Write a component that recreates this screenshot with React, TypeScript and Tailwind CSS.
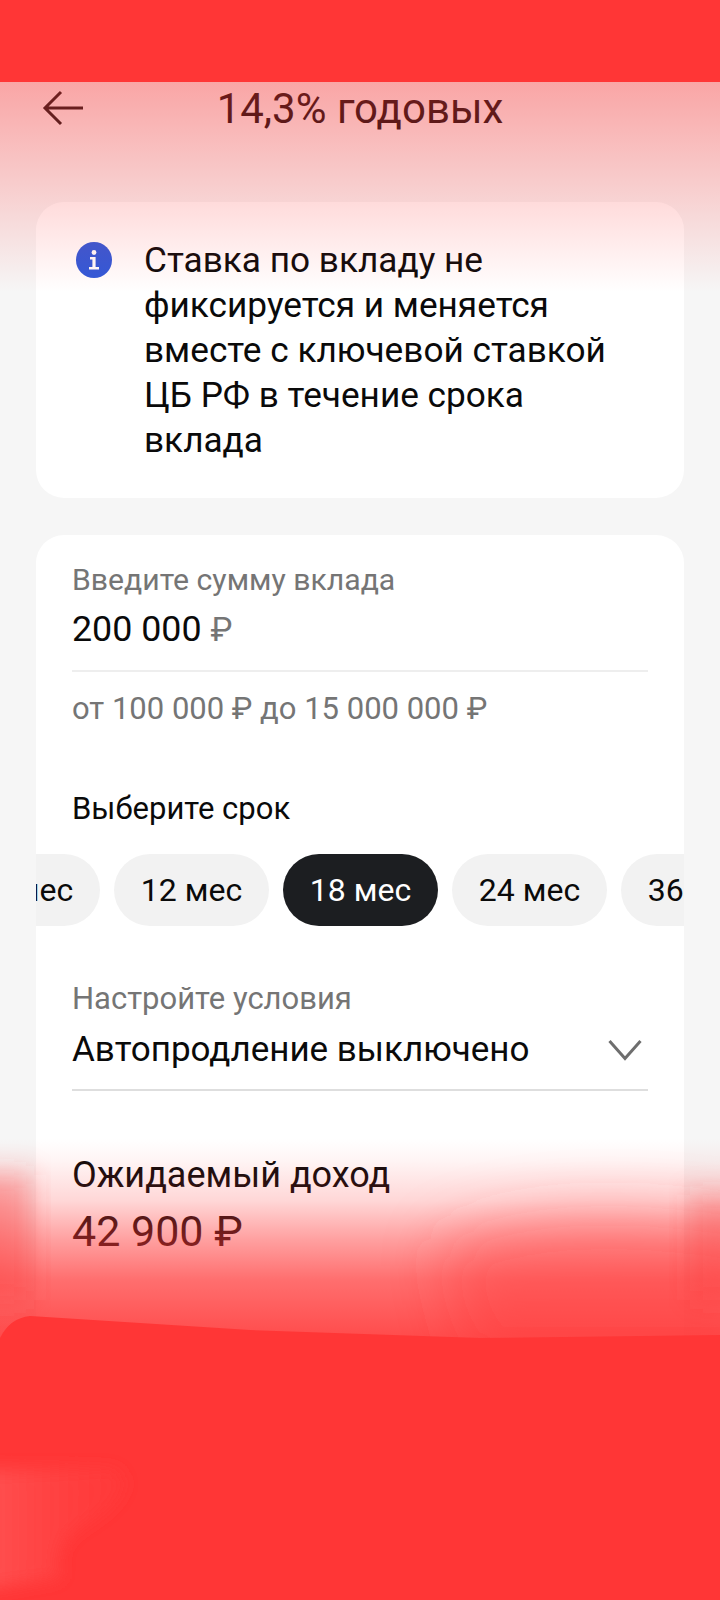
const terms = ["10 мес", "12 мес", "18 мес", "24 мес", "36 мес"];

const BottomFade = () => (
    <svg className="absolute left-0 top-[1100px]" width="720" height="500" viewBox="0 0 720 500">
        <defs>
            <linearGradient id="fade" x1="0" y1="0" x2="0" y2="1">
                <stop offset="0.16" stopColor="#ff3636" stopOpacity="0" />
                <stop offset="0.25" stopColor="#ff3636" stopOpacity="0.05" />
                <stop offset="0.42" stopColor="#ff3636" stopOpacity="0.2" />
                <stop offset="0.58" stopColor="#ff3636" stopOpacity="0.47" />
                <stop offset="0.75" stopColor="#ff3636" stopOpacity="0.72" />
                <stop offset="1" stopColor="#ff3636" stopOpacity="0.9" />
            </linearGradient>
            <linearGradient id="patch" x1="0" y1="0" x2="1" y2="0">
                <stop offset="0" stopColor="#ff5252" stopOpacity="1" />
                <stop offset="1" stopColor="#ff3c3c" stopOpacity="0.4" />
            </linearGradient>
            <filter id="soft" x="-30%" y="-60%" width="160%" height="220%">
                <feGaussianBlur stdDeviation="30" />
            </filter>
            <filter id="softer" x="-30%" y="-60%" width="160%" height="220%">
                <feGaussianBlur stdDeviation="14" />
            </filter>
            <filter id="edge" x="-30%" y="-30%" width="160%" height="160%">
                <feGaussianBlur stdDeviation="8" />
            </filter>
        </defs>
        <rect x="0" y="0" width="720" height="240" fill="url(#fade)" />
        <path d="M440 150 C520 105 640 110 760 130 V260 H470 Z" fill="#ff3636" fillOpacity="0.4" filter="url(#soft)" />
        <path d="M-40 75 H30 V200 H-40 Z" fill="#ff3636" fillOpacity="0.4" filter="url(#softer)" />
        <path d="M690 95 H760 V200 H690 Z" fill="#ff3636" fillOpacity="0.3" filter="url(#softer)" />
        <path d="M0 238 Q10 218 30 216 L250 230 L480 238 L720 235 V500 H0 Z" fill="#ff3636" />
        <path d="M-20 370 L115 368 Q145 390 85 425 Q50 445 62 478 L-20 490 Z" fill="url(#patch)" filter="url(#edge)" />
    </svg>
);

export default function App() {
    return (
        <div className="relative h-[1600px] w-[720px] overflow-hidden bg-[#f6f6f6] font-['Roboto',sans-serif] text-[#0a0a0a]">
            <div className="h-[82px] bg-[#ff3636]" />

            <header className="relative flex h-[52px] items-center justify-center">
                <svg className="absolute left-[42px] top-[8px]" width="44" height="36" viewBox="0 0 44 36" fill="none" stroke="#111" strokeWidth="3">
                    <path d="M41 18H3M19 2L3 18l16 16" />
                </svg>
                <h1 className="pt-[1px] text-[42px] leading-[52px]">14,3% годовых</h1>
            </header>

            <section className="mx-[36px] mt-[68px] flex h-[296px] gap-[32px] rounded-[28px] bg-white pl-[40px] pt-[36px]">
                <svg className="mt-[4px] shrink-0" width="36" height="36" viewBox="0 0 36 36">
                    <circle cx="18" cy="18" r="18" fill="#2f59da" />
                    <circle cx="18" cy="10.5" r="2.4" fill="#fff" />
                    <path d="M14 15h5.6v10H23v2.6H13V25h3.4v-7.4H14z" fill="#fff" />
                </svg>
                <p className="w-[490px] text-[35.2px] leading-[45px]">
                    Ставка по вкладу не фиксируется и меняется вместе с ключевой ставкой ЦБ РФ в течение срока вклада
                </p>
            </section>

            <section className="mx-[36px] mt-[37px] h-[900px] rounded-[28px] bg-white pt-[26px]">
                <div className="px-[36px]">
                    <div className="text-[30.2px] leading-[38px] text-[#757575]">Введите сумму вклада</div>
                    <div className="mt-[10px] text-[35.8px] leading-[40px]">
                        200 000 <span className="text-[33px] text-[#757575]">₽</span>
                    </div>
                    <div className="mt-[20px] h-[2px] bg-[#eeeeee]" />
                    <div className="mt-[18px] text-[31px] leading-[38px] text-[#757575]">от 100 000 ₽ до 15 000 000 ₽</div>
                    <div className="mt-[62px] text-[31px] leading-[38px]">Выберите срок</div>
                </div>

                <div className="mt-[26px] flex gap-[14px] overflow-hidden">
                    {terms.map((term, i) => (
                        <div
                            key={term}
                            className={
                                i === 2
                                    ? "flex h-[72px] w-[155px] shrink-0 items-center justify-center rounded-full bg-[#1c1e21] text-[32px] text-white"
                                    : i === 0
                                      ? "-ml-[91px] flex h-[72px] w-[155px] shrink-0 items-center justify-center rounded-full bg-[#f2f2f2] text-[32px]"
                                      : "flex h-[72px] w-[155px] shrink-0 items-center justify-center rounded-full bg-[#f2f2f2] text-[32px]"
                            }
                        >
                            {term}
                        </div>
                    ))}
                </div>

                <div className="px-[36px]">
                    <div className="mt-[54px] text-[31px] leading-[38px] text-[#757575]">Настройте условия</div>
                    <div className="mt-[11px] flex items-center justify-between border-b-2 border-[#dedede] pb-[19px]">
                        <span className="text-[35px] leading-[41px]">Автопродление выключено</span>
                        <svg className="mr-[6px]" width="34" height="22" viewBox="0 0 34 22" fill="none" stroke="#6e6e6e" strokeWidth="3">
                            <path d="M1.5 2L17 19.5 32.5 2" />
                        </svg>
                    </div>
                    <div className="mt-[64px] text-[36px] leading-[40px]">Ожидаемый доход</div>
                    <div className="mt-[11px] text-[43px] leading-[50px]">42 900 ₽</div>
                </div>
            </section>

            <div className="absolute left-0 top-[82px] h-[210px] w-[720px] bg-gradient-to-b from-[#ff3636]/42 to-[#ff3636]/0" />
            <BottomFade />
        </div>
    );
}
